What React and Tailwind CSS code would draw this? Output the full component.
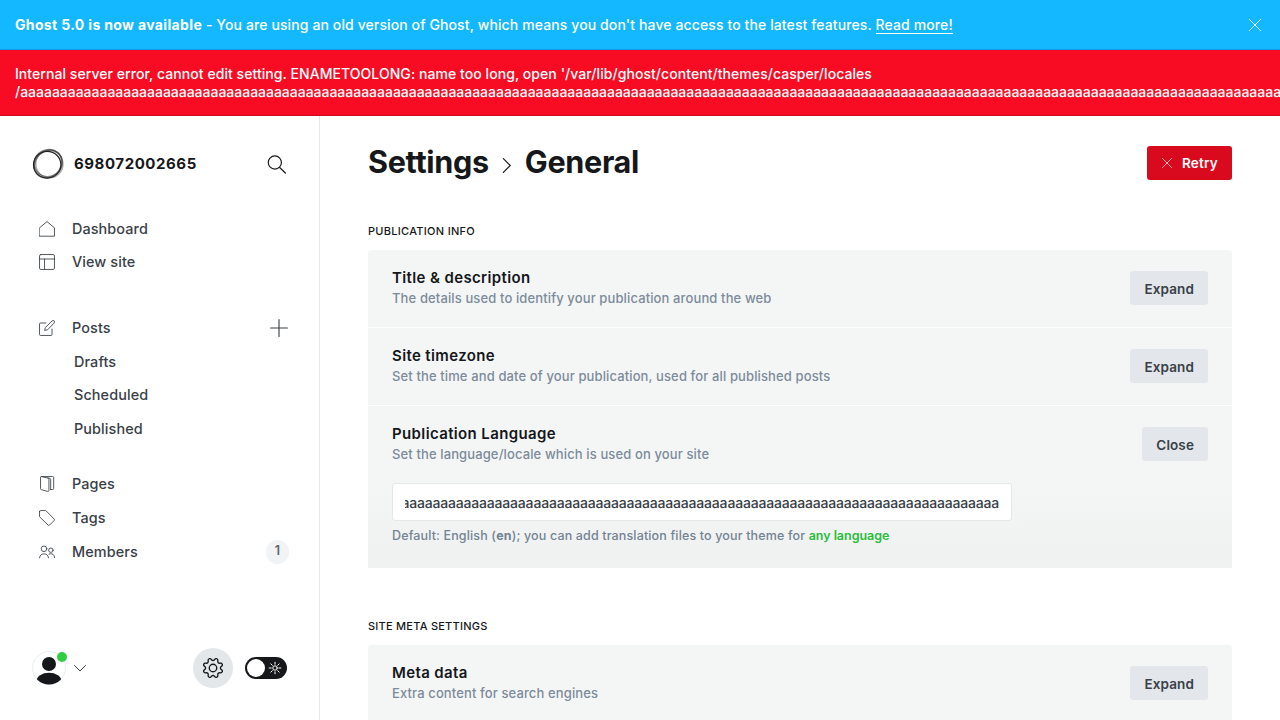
import React from "react";

const A_BANNER = "a".repeat(170);
const A_INPUT = "a".repeat(77);

function Icon({ children, className = "w-4 h-4", sw = 1.2 }) {
  return (
    <svg viewBox="0 0 24 24" className={className} fill="none" stroke="currentColor" strokeWidth={sw} strokeLinecap="round" strokeLinejoin="round">
      {children}
    </svg>
  );
}

const icons = {
  home: <path d="M.8 10.3 12 .9l11.2 9.4v12.5H.8z" />,
  site: (
    <>
      <rect x=".8" y=".8" width="22.4" height="22.4" rx="2" />
      <path d="M.8 7.5h22.4M8.3 7.5v15.7" />
    </>
  ),
  posts: (
    <>
      <path d="M19.5 13.5v8.2a1.5 1.5 0 0 1-1.5 1.5H2.3a1.5 1.5 0 0 1-1.5-1.5V6a1.5 1.5 0 0 1 1.500-1.500h8.200" />
      <path d="m12.500 14.700-4 1 .9-4.200L19.600 1.300a2.200 2.200 0 0 1 3.100 3.200z" />
    </>
  ),
  pages: (
    <>
      <path d="m3.300.8 10.400 2.400a1.500 1.500 0 0 1 1.200 1.500v17c0 1-.9 1.700-1.900 1.400L3.500 20.500a1.500 1.500 0 0 1-1.200-1.500V2.300A1.500 1.500 0 0 1 3.800.8H20.500a1.500 1.500 0 0 1 1.500 1.500v16.500a1.500 1.500 0 0 1-1.500 1.500H17.500M13 2.800l3.500.9a1.300 1.300 0 0 1 1 1.300v15.300" />
    </>
  ),
  tag: <path d="M.8 2.300v7.200a1.500 1.500 0 0 0 .4 1L13.700 22.700a1.500 1.500 0 0 0 2.100 0l7-7a1.500 1.500 0 0 0 0-2.100L10.600 1.200a1.500 1.500 0 0 0-1-.4H2.300A1.500 1.500 0 0 0 .8 2.300z" />,
  members: (
    <>
      <circle cx="7.500" cy="7.200" r="4.200" />
      <circle cx="17.800" cy="9.300" r="3.300" />
      <path d="M.8 20.800a6.800 6.800 0 0 1 13.500 0M15 15.200a5.600 5.600 0 0 1 8.300 5.300" />
    </>
  ),
};

function NavItem({ icon, label, className = "h-[33.600px]", children }) {
  return (
    <div className={`flex items-center pl-[39px] pr-[31px] text-[#394047] ${className}`}>
      <Icon sw={1.3}>{icons[icon]}</Icon>
      <span className="ml-[17px] grow text-[14.400px] tracking-[0.100px] font-medium">{label}</span>
      {children}
    </div>
  );
}

function SubItem({ label }) {
  return (
    <div className="flex h-[33.500px] items-center pl-[74px] text-[14.400px] font-medium tracking-[0.110px] text-[#394047]">{label}</div>
  );
}

function Setting({ title, desc, action, className, children }) {
  return (
    <div className={className}>
      <div className="flex items-start justify-between">
        <div className="pt-[18px]">
          <h4 className="text-[15px] leading-[19px] font-semibold tracking-[0.370px] text-[#15171a]">{title}</h4>
          <p className="mt-px text-[13px] leading-[20px] tracking-[0.120px] font-medium text-[#7c8b9a]">{desc}</p>
        </div>
        <button className="mt-[21px] h-[34px] rounded-[3px] bg-[#e3e7eb] px-[14px] pt-[2px] text-[13.500px] font-semibold tracking-[0.110px] text-[#394047]">
          {action}
        </button>
      </div>
      {children}
    </div>
  );
}

function Logo() {
  return (
    <svg viewBox="0 0 32 32" className="h-8 w-8" fill="none" stroke="#222">
      <ellipse cx="16" cy="16" rx="15" ry="12.600" strokeWidth="1.500" transform="rotate(-48 16 16)" opacity=".5" />
      <ellipse cx="17.300" cy="16" rx="13.600" ry="13.800" strokeWidth="1.500" opacity=".4" />
      <ellipse cx="16.600" cy="15.200" rx="14.200" ry="13.400" strokeWidth="1.300" transform="rotate(-25 16 16)" opacity=".5" />
      <ellipse cx="15.200" cy="16.700" rx="13.700" ry="13.400" strokeWidth="1.200" />
    </svg>
  );
}

export default function App() {
  return (
    <div className="flex h-[720px] w-[1280px] flex-col overflow-hidden bg-white font-['Inter',sans-serif]">
      <div className="flex h-[50px] shrink-0 items-center justify-between border-b border-[#1299ea] bg-[#14b8ff] pl-[15px] pr-[18px] text-[14px] font-medium tracking-[0.110px] text-white">
        <p className="whitespace-nowrap">
          <b className="font-bold tracking-[0.350px]">Ghost 5.0 is now available</b> - You are using an old version of Ghost, which means you don't have access to the latest features.{" "}
          <span className="border-b border-white">Read more!</span>
        </p>
        <Icon className="h-[14px] w-[14px]" sw={1.500}><path d="M2 2l20 20M22 2 2 22" /></Icon>
      </div>
      <div className="h-[66px] shrink-0 overflow-hidden border-b border-[#d20a20] bg-[#f80c24] pl-[15px] pt-[15px] text-[14px] leading-[18px] font-medium tracking-[0.060px] whitespace-nowrap text-white">
        <p>Internal server error, cannot edit setting. ENAMETOOLONG: name too long, open '/var/lib/ghost/content/themes/casper/locales</p>
        <p className="tracking-[-0.020px]">/{A_BANNER}</p>
      </div>

      <div className="flex min-h-0 grow">
        <nav className="flex w-[320px] shrink-0 flex-col border-r border-[#e5e7e8]">
          <div className="mt-8 flex h-8 items-center pl-8 pr-[33px]">
            <Logo />
            <span className="ml-[10px] grow text-[15px] font-bold tracking-[0.570px] text-[#15171a]">698072002665</span>
            <Icon className="h-[19px] w-[19px] text-[#15171a]" sw={1.500}>
              <circle cx="9.900" cy="9.500" r="8.300" />
              <path d="m16 15.800 7.200 7" />
            </Icon>
          </div>
          <div className="mt-8">
            <NavItem icon="home" label="Dashboard" />
            <NavItem icon="site" label="View site" className="h-[32.600px]" />
          </div>
          <div className="mt-[33px]">
            <NavItem icon="posts" label="Posts">
              <Icon className="h-[18px] w-[18px]" sw={1.500}><path d="M12 .8v22.400M.8 12h22.400" /></Icon>
            </NavItem>
            <SubItem label="Drafts" />
            <SubItem label="Scheduled" />
            <SubItem label="Published" />
          </div>
          <div className="mt-[22px]">
            <NavItem icon="pages" label="Pages" />
            <NavItem icon="tag" label="Tags" />
            <NavItem icon="members" label="Members" className="h-[34.600px]">
              <span className="-mr-px flex h-6 w-[23px] items-center justify-center rounded-full bg-[#f1f3f5] text-[12.500px] font-semibold text-[#5d6670]">1</span>
            </NavItem>
          </div>
          <div className="mt-auto mb-8 flex h-10 items-center pl-8 pr-8">
            <div className="relative h-[34px] w-[34px]">
              <svg viewBox="0 0 34 34" className="h-[34px] w-[34px]">
                <defs><clipPath id="avatar"><circle cx="17" cy="17" r="16.500" /></clipPath></defs>
                <circle cx="17" cy="17" r="16.500" fill="#fff" stroke="#e5e8eb" strokeWidth=".8" />
                <g clipPath="url(#avatar)" fill="#15171a">
                  <circle cx="17" cy="13" r="7" />
                  <ellipse cx="17" cy="30" rx="12.500" ry="8.300" />
                </g>
              </svg>
              <span className="absolute -right-[1px] top-[1px] h-[10px] w-[10px] rounded-full bg-[#30cf43]" />
            </div>
            <Icon className="ml-2 h-3 w-3 text-[#394047]" sw={2}><path d="m1 7 11 11L23 7" /></Icon>
            <div className="ml-auto flex h-10 w-10 items-center justify-center rounded-full bg-[#e3e7ea] text-[#15171a]">
              <Icon className="h-5 w-5" sw={1.600}>
                <path d="M10.546 2.438a1.957 1.957 0 0 0 2.908 0L14.400 1.400a1.959 1.959 0 0 1 3.410 1.413l-.071 1.400A1.958 1.958 0 0 0 19.790 6.270l1.400-.071A1.959 1.959 0 0 1 22.600 9.600l-1.040.942a1.959 1.959 0 0 0 0 2.909l1.040.942a1.959 1.959 0 0 1-1.413 3.410l-1.400-.071a1.958 1.958 0 0 0-2.056 2.056l.071 1.400A1.959 1.959 0 0 1 14.400 22.600l-.941-1.041a1.959 1.959 0 0 0-2.908 0L9.600 22.600A1.959 1.959 0 0 1 6.192 21.190l.072-1.400a1.958 1.958 0 0 0-2.056-2.056l-1.400.071A1.958 1.958 0 0 1 1.400 14.400l1.041-.942a1.959 1.959 0 0 0 0-2.908L1.400 9.600A1.958 1.958 0 0 1 2.810 6.192l1.400.071A1.958 1.958 0 0 0 6.264 4.210L6.192 2.800A1.959 1.959 0 0 1 9.600 1.400z" />
                <circle cx="12" cy="12" r="4.500" />
              </Icon>
            </div>
            <div className="ml-3 flex h-[22px] w-[42px] items-center justify-between rounded-full bg-[#15171a] pl-[2px] pr-[5px] text-white">
              <span className="h-[18px] w-[18px] rounded-full bg-white" />
              <Icon className="h-[14px] w-[14px]" sw={1.700}>
                <circle cx="12" cy="12" r="3.800" />
                <path d="M12 2v3.500M12 18.500V22M2 12h3.500M18.500 12H22M4.900 4.900l2.500 2.500M16.600 16.600l2.500 2.500M19.100 4.900l-2.500 2.500M7.400 16.600l-2.500 2.500" />
              </Icon>
            </div>
          </div>
        </nav>

        <main className="flex grow flex-col overflow-hidden px-12">
          <header className="mt-[30px] flex h-[34px] shrink-0 items-center justify-between">
            <h2 className="mb-[2px] flex items-center text-[30.600px] leading-[34px] font-bold tracking-[-0.330px] text-[#15171a]">
              Settings
              <Icon className="mr-[11px] ml-[10px] mt-[7px] h-[15px] w-[15px]" sw={1.800}><path d="m7 1 11 11L7 23" /></Icon>
              General
            </h2>
            <button className="flex h-[34px] w-[85px] items-center rounded-[3px] bg-[#d90a1e] pl-[15px] text-[13.500px] font-semibold tracking-[0.200px] text-white">
              <Icon className="mr-[10px] h-[10px] w-[10px] opacity-80" sw={2}><path d="M1 1l22 22M23 1 1 23" /></Icon>
              Retry
            </button>
          </header>

          <h3 className="mt-[43px] h-[16px] shrink-0 text-[11px] leading-[16px] font-medium tracking-[0.290px] text-[#15171a]">PUBLICATION INFO</h3>
          <section className="mt-[11px] shrink-0 overflow-hidden rounded-t-[3px]">
            <Setting className="h-[78px] border-b border-white bg-[#f4f6f6] px-6" title="Title & description" desc="The details used to identify your publication around the web" action="Expand" />
            <Setting className="h-[78px] border-b border-white bg-[#f4f6f6] px-6" title="Site timezone" desc="Set the time and date of your publication, used for all published posts" action="Expand" />
            <Setting className="h-[162px] bg-linear-to-b from-[#f4f6f6] from-50% to-[#eff1f1] px-6" title="Publication Language" desc="Set the language/locale which is used on your site" action="Close">
              <div className="mt-[19px] flex h-[38px] w-[620px] items-center rounded-[3px] border border-[#e3e7ea] bg-white px-[12px]">
                <div className="flex w-full justify-end overflow-hidden text-[14px] font-medium tracking-[-0.190px] text-[#394047]">
                  <span>{A_INPUT}</span>
                </div>
              </div>
              <p className="mt-[5px] text-[12.500px] leading-[20px] font-medium tracking-[0.145px] text-[#738393]">
                Default: English (<b className="font-bold">en</b>); you can add translation files to your theme for <span className="font-semibold tracking-[-0.030px] text-[#2bbd3b]">any language</span>
              </p>
            </Setting>
          </section>

          <h3 className="mt-[50px] h-[16px] shrink-0 text-[11px] leading-[16px] font-medium tracking-[0.240px] text-[#15171a]">SITE META SETTINGS</h3>
          <section className="mt-[11px] shrink-0 overflow-hidden rounded-t-[3px]">
            <Setting className="h-[78px] bg-[#f4f6f6] px-6" title="Meta data" desc="Extra content for search engines" action="Expand" />
          </section>
        </main>
      </div>
    </div>
  );
}
